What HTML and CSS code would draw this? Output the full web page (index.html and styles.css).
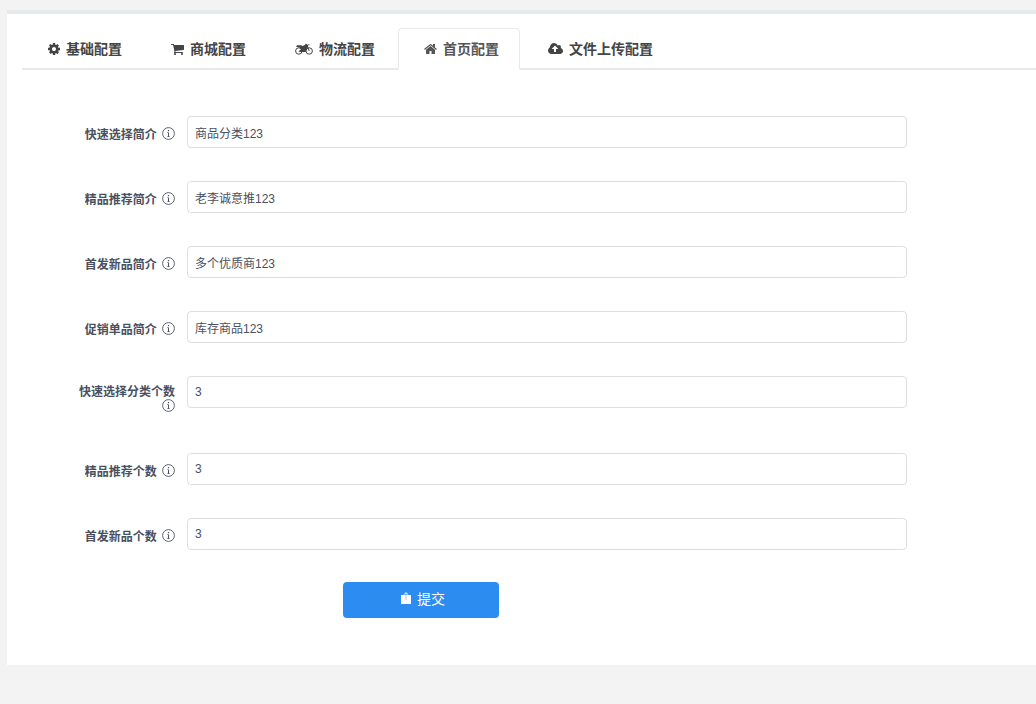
FILE: index.html
```html
<!DOCTYPE html>
<html lang="zh-CN">
<head>
<meta charset="utf-8">
<title>首页配置</title>
<link rel="stylesheet" href="styles.css">
</head>
<body>
<svg class="sprite" aria-hidden="true">
  <symbol id="info" viewBox="0 0 13 15">
    <circle cx="6.5" cy="7.5" r="5.9" fill="none" stroke="currentColor" stroke-width=".9"/>
    <path d="M5.9 4h1.200v1.300H5.900zM5 6.400h2v4h1v.7H5v-.7h1V7.100H5z" fill="currentColor"/>
  </symbol>
</svg>
<main class="card">
  <nav class="tabs">
    <a class="tab" href="#base"><svg class="icon icon-12" viewBox="128 0 1536 1792"><path d="M1152 896q0-106-75-181t-181-75-181 75-75 181 75 181 181 75 181-75 75-181zm512-109v222q0 12-8 23t-20 13l-185 28q-19 54-39 91 35 50 107 138 10 12 10 25t-9 23q-27 37-99 108t-94 71q-12 0-26-9l-138-108q-44 23-91 38-16 136-29 186-7 28-36 28h-222q-14 0-24.5-8.5t-11.5-21.5l-28-184q-49-16-90-37l-141 107q-10 9-25 9-14 0-25-11-126-114-165-168-7-10-7-23 0-12 8-23 15-21 51-66.5t54-70.5q-27-50-41-99l-183-27q-13-2-21-12.5t-8-23.5v-222q0-12 8-23t19-13l186-28q14-46 39-92-40-57-107-138-10-12-10-24 0-10 9-23 26-36 98.5-107.5t94.5-71.5q13 0 26 10l138 107q44-23 91-38 16-136 29-186 7-28 36-28h222q14 0 24.5 8.5t11.5 21.5l28 184q49 16 90 37l142-107q9-9 24-9 13 0 25 10 129 119 165 170 7 8 7 22 0 12-8 23-15 21-51 66.5t-54 70.5q26 50 41 98l183 28q13 2 21 12.5t8 23.5z"/></svg>基础配置</a>
    <a class="tab" href="#mall"><svg class="icon icon-13" viewBox="64 0 1664 1792"><path d="M704 1536q0 52-38 90t-90 38-90-38-38-90 38-90 90-38 90 38 38 90zm896 0q0 52-38 90t-90 38-90-38-38-90 38-90 90-38 90 38 38 90zm128-1088v512q0 24-16.5 42.5t-40.5 21.5l-1044 122q13 60 13 70 0 16-24 64h920q26 0 45 19t19 45-19 45-45 19h-1024q-26 0-45-19t-19-45q0-11 8-31.5t16-36 21.5-40 15.5-29.5l-177-823h-204q-26 0-45-19t-19-45 19-45 45-19h256q16 0 28.5 6.5t19.5 15.5 13 24.5 8 26 5.5 29.5 4.5 26h1201q26 0 45 19t19 45z"/></svg>商城配置</a>
    <a class="tab" href="#logistics"><svg class="icon icon-18" viewBox="0 0 18 14"><g fill="none" stroke="currentColor"><circle cx="3.8" cy="9" r="3.2"/><circle cx="14.2" cy="9" r="3.2"/><path d="M10.2 2.4h1.7L14.2 9M11.9 4.2l1.4-1.4h1.1"/></g><path d="M2 3.300h3.400c1 0 1.600.7 2.400.7.700 0 1.500-1.200 2.800-1.200h1.400l1 2.900c-1.300.9-2.100 2.200-2.200 4.200H5L3.400 9.400 6 7.200 4.600 5.400 1 4.800z"/></svg>物流配置</a>
    <a class="tab tab-active" href="#home" aria-current="page"><svg class="icon icon-13" viewBox="64 0 1664 1792"><path d="M1472 992v480q0 26-19 45t-45 19h-384v-384h-256v384h-384q-26 0-45-19t-19-45v-480q0-1 .5-3t.5-3l575-474 575 474q1 2 1 6zm223-69l-62 74q-8 9-21 11h-3q-13 0-21-7l-692-577-692 577q-12 8-24 7-13-2-21-11l-62-74q-8-10-7-23.5t11-21.5l719-599q32-26 76-26t76 26l244 204v-195q0-14 9-23t23-9h192q14 0 23 9t9 23v408l219 182q10 8 11 21.5t-7 23.5z"/></svg>首页配置</a>
    <a class="tab" href="#upload"><svg class="icon icon-15" viewBox="-64 0 1920 1792"><path d="M1216 864q0-14-9-23l-352-352q-9-9-23-9t-23 9l-351 351q-10 12-10 24 0 14 9 23t23 9h224v352q0 13 9.500 22.500t22.500 9.500h192q13 0 22.500-9.500t9.500-22.500v-352h224q13 0 22.500-9.500t9.500-22.500zm640 288q0 159-112.500 271.500t-271.500 112.500h-1088q-185 0-316.500-131.500t-131.500-316.500q0-130 70-240t188-165q-2-30-2-43 0-212 150-362t362-150q156 0 285.500 87t188.500 231q71-62 166-62 106 0 181 75t75 181q0 76-41 138 130 31 213.500 135.500t83.500 238.500z"/></svg>文件上传配置</a>
  </nav>
  <form class="form">
    <div class="row"><label class="label" for="f1">快速选择简介 <svg class="info"><use href="#info"/></svg></label><input class="input" id="f1" type="text" value="商品分类123"></div>
    <div class="row"><label class="label" for="f2">精品推荐简介 <svg class="info"><use href="#info"/></svg></label><input class="input" id="f2" type="text" value="老李诚意推123"></div>
    <div class="row"><label class="label" for="f3">首发新品简介 <svg class="info"><use href="#info"/></svg></label><input class="input" id="f3" type="text" value="多个优质商123"></div>
    <div class="row"><label class="label" for="f4">促销单品简介 <svg class="info"><use href="#info"/></svg></label><input class="input" id="f4" type="text" value="库存商品123"></div>
    <div class="row"><label class="label" for="f5">快速选择分类个数 <svg class="info"><use href="#info"/></svg></label><input class="input" id="f5" type="text" value="3"></div>
    <div class="row"><label class="label" for="f6">精品推荐个数 <svg class="info"><use href="#info"/></svg></label><input class="input" id="f6" type="text" value="3"></div>
    <div class="row"><label class="label" for="f7">首发新品个数 <svg class="info"><use href="#info"/></svg></label><input class="input" id="f7" type="text" value="3"></div>
    <button class="submit" type="button"><svg class="submit-icon" viewBox="0 0 10 12"><path d="M0 3h10v9H0z" fill="#fff"/><path d="M5 0l2.500 2.500H2.500z" fill="#fff" opacity=".8"/><path d="M5 2v6" stroke="#2d8cf0" stroke-opacity=".45"/></svg>提交</button>
  </form>
</main>
</body>
</html>
```
FILE: styles.css
```css
* {
  box-sizing: border-box;
}

body {
  margin: 0;
  padding: 10px 0 39px 7px;
  background: #f3f3f3;
  color: #495060;
  font: 12px "Liberation Sans", "Noto Sans CJK SC", sans-serif;
}

.sprite {
  position: absolute;
  width: 0;
  height: 0;
}

.card {
  padding: 14px 0 47px 15px;
  border-top: 4px solid #e7eaec;
  background: #fff;
}

.tabs {
  display: flex;
  gap: 2px;
  border-bottom: 2px solid #e7eaec;
}

.tab {
  display: flex;
  align-items: center;
  gap: 6px;
  height: 42px;
  margin-bottom: -2px;
  padding: 0 20px 0 25px;
  border: 1px solid transparent;
  border-radius: 4px 4px 0 0;
  color: #444;
  font-size: 14px;
  font-weight: 600;
  line-height: 20px;
  text-decoration: none;
}

.tab-active {
  border-color: #e7eaec;
  border-bottom-color: #fff;
  background: #fff;
  color: #555;
}

.icon {
  height: 14px;
  fill: currentColor;
}

.icon-12 {
  width: 12px;
}

.icon-13 {
  width: 13px;
}

.icon-15 {
  width: 15px;
}

.icon-18 {
  width: 18px;
}

.form {
  padding: 46px 15px 0 45px;
}

.row {
  display: flex;
  align-items: flex-start;
  margin-bottom: 30px;
}

.row:last-of-type {
  margin-bottom: 29px;
}

.label {
  flex: none;
  width: 120px;
  padding: 10px 12px 10px 0;
  font-weight: 600;
  line-height: 12px;
  text-align: right;
}

.info {
  width: 13px;
  height: 15px;
  margin-left: 2px;
  vertical-align: -2px;
}

.input {
  flex: 1;
  max-width: 720px;
  height: 32px;
  padding: 4px 7px;
  border: 1px solid #dcdee2;
  border-radius: 4px;
  background: #fff;
  color: #495060;
  font: inherit;
}

.submit {
  display: flex;
  align-items: center;
  justify-content: center;
  gap: 6px;
  width: 156px;
  height: 36px;
  margin-left: 276px;
  padding: 0 0 4px 4px;
  border: 0;
  border-radius: 4px;
  background: #2d8cf0;
  color: #fff;
  font: inherit;
  font-size: 14px;
}

.submit-icon {
  width: 10px;
  height: 12px;
}
```
